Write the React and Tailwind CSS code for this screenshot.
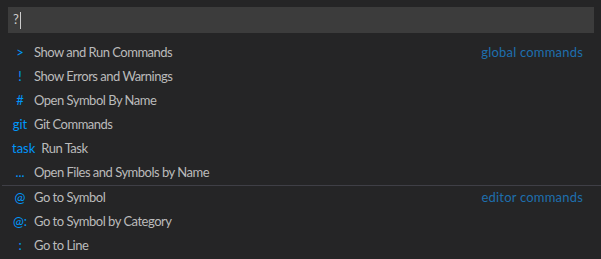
import React from "react";

const globalItems = [
    { prefix: ">", label: "Show and Run Commands", desc: "global commands" },
    { prefix: "!", label: "Show Errors and Warnings" },
    { prefix: "#", label: "Open Symbol By Name" },
    { prefix: "git", label: "Git Commands" },
    { prefix: "task", label: "Run Task" },
    { prefix: "...", label: "Open Files and Symbols by Name" },
];

const editorItems = [
    { prefix: "@", label: "Go to Symbol", desc: "editor commands" },
    { prefix: "@:", label: "Go to Symbol by Category" },
    { prefix: ":", label: "Go to Line" },
];

const Row = ({ item }) => (
    <div className="h-6 flex items-center pl-3 pr-[18px]">
        <span className="min-w-4 text-center text-[#0097fb] shrink-0">{item.prefix}</span>
        <span className="ml-1.5 text-[#bbbbbb] flex-1 tracking-[-0.5px]">{item.label}</span>
        {item.desc && <span className="text-[#1e6fae] tracking-[0.2px]">{item.desc}</span>}
    </div>
);

const App = () => {
    return (
        <div className="w-[601px] h-[259px] bg-[#252526] font-['Lato',sans-serif] text-[13px] overflow-hidden">
            <div className="pt-[7px] pl-2 pr-[7px]">
                <div className="h-[26px] bg-[#3c3c3c] flex items-center pl-[5px] text-[#cccccc]">
                    <span>?</span>
                    <span className="w-px h-[17px] bg-[#cccccc] ml-px"></span>
                </div>
            </div>
            <div className="pt-2">
                {globalItems.map((item) => (
                    <Row key={item.label} item={item} />
                ))}
                <div className="h-px bg-[#3f3f46] ml-0.5"></div>
                {editorItems.map((item) => (
                    <Row key={item.label} item={item} />
                ))}
            </div>
        </div>
    );
};

export default App;
